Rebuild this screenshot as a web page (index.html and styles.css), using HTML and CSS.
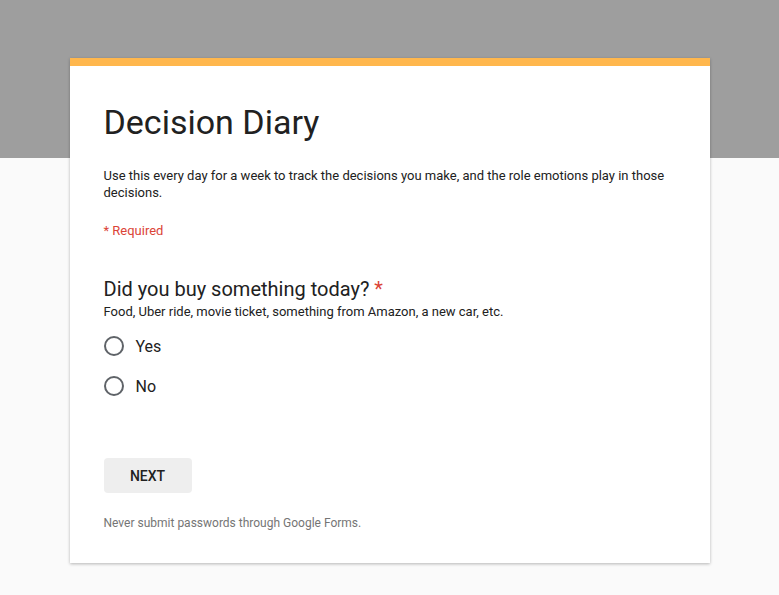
FILE: index.html
```html
<!DOCTYPE html>
<html>
<head>
<meta charset="utf-8">
<link rel="stylesheet" href="styles.css">
</head>
<body>
<div class="card">
  <h1 class="title">Decision Diary</h1>
  <p class="desc">Use this every day for a week to track the decisions you make, and the role emotions play in those decisions.</p>
  <p class="required">* Required</p>
  <div class="question">
    <div class="q-title">Did you buy something today? <span class="star">*</span></div>
    <div class="q-help">Food, Uber ride, movie ticket, something from Amazon, a new car, etc.</div>
    <div class="options">
      <label class="option"><span class="radio"></span><span class="opt-text">Yes</span></label>
      <label class="option"><span class="radio"></span><span class="opt-text">No</span></label>
    </div>
  </div>
  <button class="next">NEXT</button>
  <p class="footer">Never submit passwords through Google Forms.</p>
</div>
</body>
</html>
```

FILE: styles.css
```css
html, body {
  margin: 0;
  padding: 0;
}
body {
  font-family: Roboto, "Liberation Sans", Arial, sans-serif;
  background: linear-gradient(#9e9e9e 0, #9e9e9e 158px, #fafafa 158px);
  min-height: 595px;
  color: #202124;
  overflow: hidden;
}
.card {
  width: 640px;
  margin: 58px auto 0;
  background: #fff;
  border-top: 8px solid #ffb74d;
  box-shadow: 0 1px 3px rgba(0,0,0,0.28);
  padding: 36px 34px 32px;
  box-sizing: border-box;
}
.title {
  margin: 0;
  font-size: 34px;
  line-height: 40px;
  font-weight: 400;
  color: #212121;
}
.desc {
  margin: 25px 0 0;
  font-size: 13px;
  line-height: 17px;
  color: #212121;
}
.required {
  margin: 21px 0 0;
  font-size: 13px;
  line-height: 17px;
  color: #db4437;
}
.question {
  margin-top: 38px;
}
.q-title {
  font-size: 20px;
  line-height: 24px;
  color: #212121;
}
.star {
  color: #db4437;
}
.q-help {
  margin-top: 2px;
  font-size: 13px;
  line-height: 17px;
  color: #212121;
}
.options {
  margin-top: 6px;
  display: flex;
  flex-direction: column;
}
.option {
  display: flex;
  align-items: center;
  height: 40px;
}
.radio {
  width: 16px;
  height: 16px;
  border: 2px solid #5f6368;
  border-radius: 50%;
  flex: none;
}
.opt-text {
  margin-left: 12px;
  font-size: 16px;
  color: #212121;
}
.next {
  display: block;
  margin-top: 52px;
  width: 88px;
  height: 35px;
  border: none;
  border-radius: 4px;
  background: #eeeeee;
  font-family: Roboto, "Liberation Sans", Arial, sans-serif;
  font-size: 14px;
  font-weight: 500;
  color: #212121;
  padding: 0;
}
.footer {
  margin: 22px 0 0;
  font-size: 12px;
  line-height: 16px;
  color: #757575;
}
```
